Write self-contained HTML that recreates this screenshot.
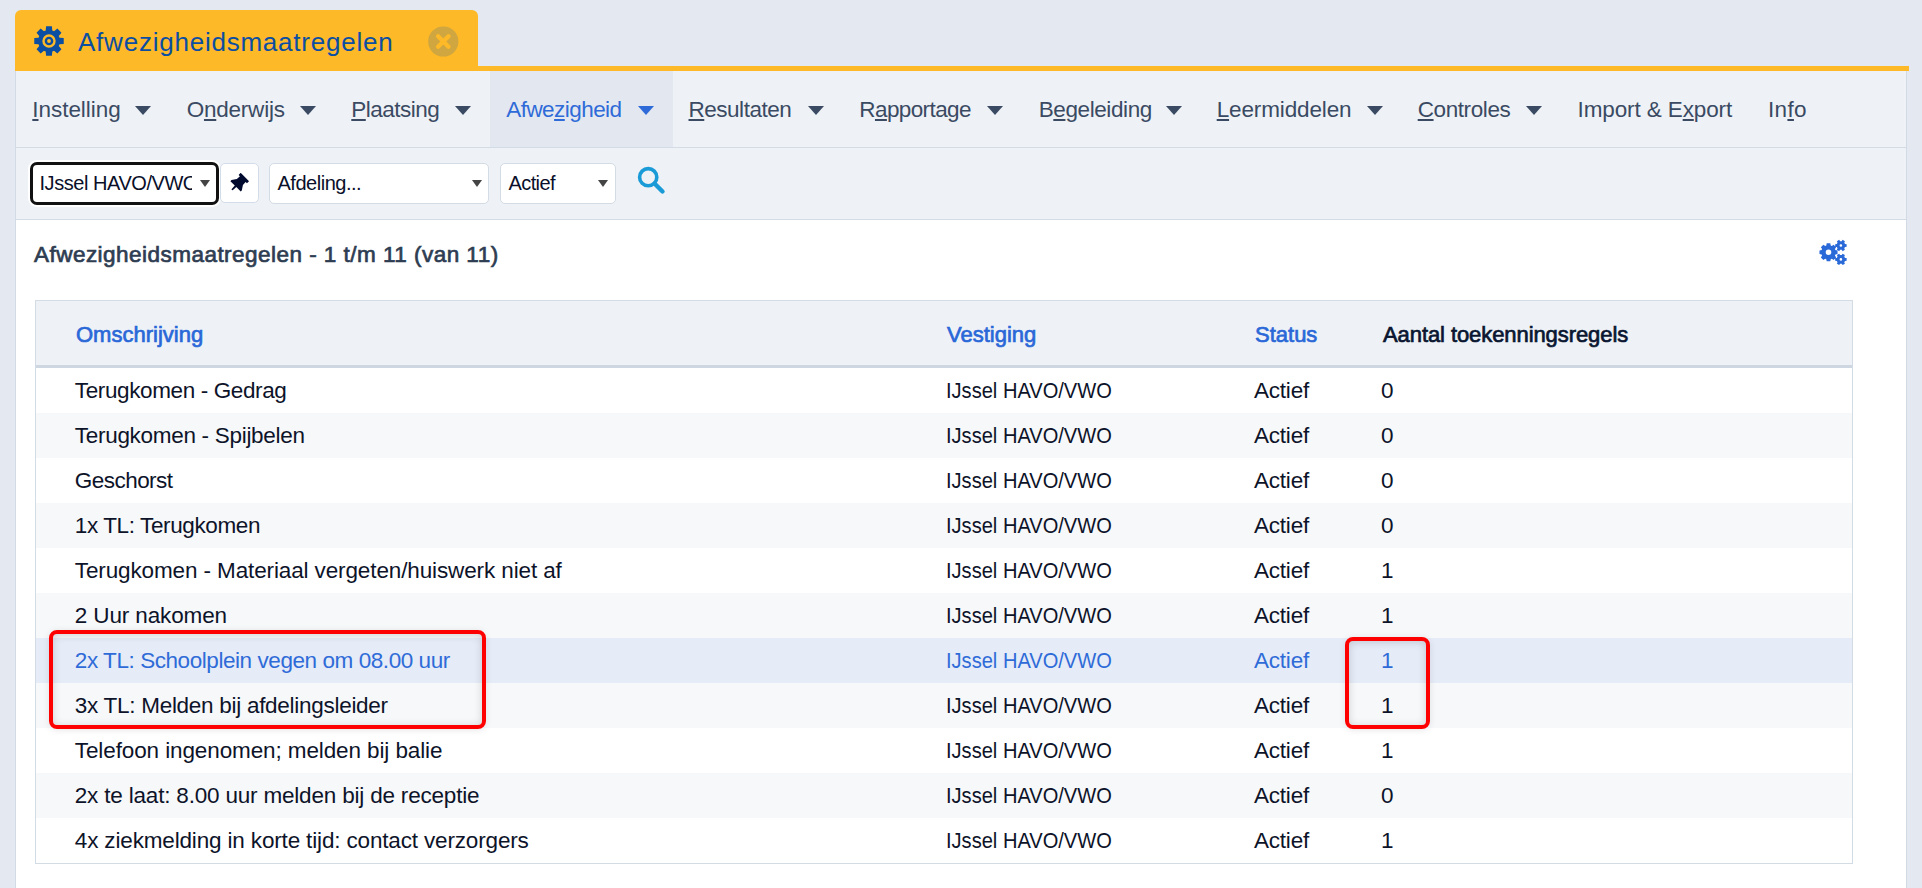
<!DOCTYPE html>
<html>
<head>
<meta charset="utf-8">
<style>
html,body{margin:0;padding:0;}
body{width:1922px;height:888px;overflow:hidden;background:#e4e9f1;position:relative;font-family:"Liberation Sans",sans-serif;}
.abs{position:absolute;}
#tab{left:15px;top:10px;width:463px;height:61px;background:#fdb928;border-radius:6px 6px 0 0;}
#tabline{left:15px;top:66px;width:1894px;height:5px;background:#fdb928;}
#panel{left:15px;top:71px;width:1890px;height:830px;background:#fff;border-left:1px solid #d2dae5;border-right:1px solid #d2dae5;}
#nav{left:16px;top:71px;width:1890px;height:76px;background:#eef2f6;border-bottom:1px solid #d3dbe5;}
#navactive{left:490px;top:71px;width:183px;height:76px;background:#e3e8f0;}
#filter{left:16px;top:148px;width:1890px;height:71px;background:#eef2f6;border-bottom:1px solid #d3dbe5;}
.tabtitle{left:78px;top:25px;font-size:26px;color:#0b4ea2;letter-spacing:0.77px;line-height:34px;white-space:nowrap;}
.nav{top:95.5px;font-size:22.5px;line-height:28px;color:#3b4a63;white-space:nowrap;}
.nav u{text-decoration:underline;text-decoration-thickness:2px;text-underline-offset:1.5px;}
.nav.act{color:#2f6bd8;}
.arr{top:106px;width:0;height:0;border-left:8px solid transparent;border-right:8px solid transparent;border-top:9px solid #3b4a63;}
.arr.act{border-top-color:#2f6bd8;}
.sel{background:#fff;border:1px solid #d3dbe5;border-radius:5px;box-sizing:border-box;font-size:20px;color:#0a0f2a;}
.sel span{position:absolute;top:8px;white-space:nowrap;}
.sarr{position:absolute;width:0;height:0;border-left:5px solid transparent;border-right:5px solid transparent;border-top:7.7px solid #444;}
#heading{left:34px;top:241px;font-size:22.5px;font-weight:normal;-webkit-text-stroke:0.7px currentColor;color:#2e3d52;letter-spacing:0.47px;white-space:nowrap;line-height:28px;}
#table{left:35px;top:300px;width:1818px;height:564px;border:1px solid #d3dbe5;box-sizing:border-box;background:#fff;}
#thead{left:36px;top:301px;width:1816px;height:64px;background:#eef2f6;border-bottom:3px solid #cdd6e1;}
.th{top:321px;font-size:22px;line-height:28px;white-space:nowrap;-webkit-text-stroke:0.7px currentColor;}
.row{left:36px;width:1816px;height:45px;}
.alt{background:#f7f8fa;}
.hl{background:#e5ebf7;}
.td{font-size:22.5px;line-height:28px;color:#0d1329;white-space:nowrap;top:8.5px;}
.hl .td{color:#2f6bd8;}
.vest{transform-origin:0 0;transform:scaleX(0.8922);}
.redbox{border:4px solid #ff0000;border-radius:8px;box-sizing:border-box;box-shadow:inset 0 1px 9px rgba(0,0,0,0.16),0 1px 7px rgba(0,0,0,0.10);}
</style>
</head>
<body>
<div id="panel" class="abs"></div>
<div id="tabline" class="abs"></div>
<div id="tab" class="abs"></div>
<svg class="abs" style="left:34px;top:26px" width="30" height="30" viewBox="0 0 30 30">
  <path d="M11.70 4.51 L12.10 0.28 L17.90 0.28 L18.30 4.51 L20.09 5.25 L23.36 2.54 L27.46 6.64 L24.75 9.91 L25.49 11.70 L29.72 12.10 L29.72 17.90 L25.49 18.30 L24.75 20.09 L27.46 23.36 L23.36 27.46 L20.09 24.75 L18.30 25.49 L17.90 29.72 L12.10 29.72 L11.70 25.49 L9.91 24.75 L6.64 27.46 L2.54 23.36 L5.25 20.09 L4.51 18.30 L0.28 17.90 L0.28 12.10 L4.51 11.70 L5.25 9.91 L2.54 6.64 L6.64 2.54 L9.91 5.25 Z" fill="#0b4ea2"/>
  <circle cx="15" cy="15" r="5.5" fill="none" stroke="#fdb928" stroke-width="2.4"/>
  <circle cx="15" cy="15" r="1.9" fill="#fdb928"/>
</svg>
<div class="abs tabtitle">Afwezigheidsmaatregelen</div>
<svg class="abs" style="left:427.5px;top:26px" width="31" height="31" viewBox="0 0 31 31">
  <circle cx="15.3" cy="15.5" r="15.1" fill="#cfa63f"/>
  <path d="M10.1 10.3 L20.5 20.7 M20.5 10.3 L10.1 20.7" stroke="#fdb928" stroke-width="4.4" stroke-linecap="round"/>
</svg>
<div id="nav" class="abs"></div>
<div id="navactive" class="abs"></div>
<div id="filter" class="abs"></div>
<div class="nav abs" style="left:32.30px;letter-spacing:-0.045px"><u>I</u>nstelling</div>
<div class="arr abs" style="left:135.2px"></div>
<div class="nav abs" style="left:186.70px;letter-spacing:-0.225px">O<u>n</u>derwijs</div>
<div class="arr abs" style="left:300.2px"></div>
<div class="nav abs" style="left:351.30px;letter-spacing:-0.525px"><u>P</u>laatsing</div>
<div class="arr abs" style="left:454.8px"></div>
<div class="nav abs act" style="left:506.30px;letter-spacing:-0.56px">Afwe<u>z</u>igheid</div>
<div class="arr abs act" style="left:637.8px"></div>
<div class="nav abs" style="left:688.50px;letter-spacing:-0.478px"><u>R</u>esultaten</div>
<div class="arr abs" style="left:808.0px"></div>
<div class="nav abs" style="left:859.30px;letter-spacing:-0.6px">R<u>a</u>pportage</div>
<div class="arr abs" style="left:987.0px"></div>
<div class="nav abs" style="left:1038.70px;letter-spacing:-0.4px">B<u>e</u>geleiding</div>
<div class="arr abs" style="left:1166.2px"></div>
<div class="nav abs" style="left:1216.70px;letter-spacing:-0.128px"><u>L</u>eermiddelen</div>
<div class="arr abs" style="left:1366.5px"></div>
<div class="nav abs" style="left:1417.70px;letter-spacing:-0.4px"><u>C</u>ontroles</div>
<div class="arr abs" style="left:1526.3px"></div>
<div class="nav abs" style="left:1577.50px;letter-spacing:-0.114px">Import &amp; E<u>x</u>port</div>
<div class="nav abs" style="left:1768.10px;letter-spacing:0.267px">In<u>f</u>o</div>
<div class="abs sel" style="left:30px;top:162px;width:189px;height:43px;border:3.5px solid #111;border-radius:7px;box-shadow:0 0 0 2px #fff;overflow:hidden">
  <span style="left:6.5px;top:7px;width:152px;overflow:hidden;letter-spacing:-0.45px">IJssel HAVO/VWO</span>
  <div class="sarr" style="left:166.5px;top:14.5px"></div>
</div>
<div class="abs sel" style="left:220px;top:163px;width:39px;height:40px;border-color:#d3dde9"></div>
<svg class="abs" style="left:220px;top:163px" width="39" height="40" viewBox="220 163 39 40">
  <g transform="translate(238.4 183.5) rotate(45) translate(0 -9.1)" fill="#000a2e">
    <path d="M-5.9 0.3 Q-5.9 0 -5.6 0 L5.6 0 Q5.9 0 5.9 0.3 L5.9 2.6 Q5.9 2.9 5.6 2.9 L4.0 2.9 L4.3 7.0 L7.3 11.6 L7.3 13.1 L1.1 13.1 L0.8 18.0 Q0 18.6 -0.8 18.0 L-1.1 13.1 L-7.3 13.1 L-7.3 11.6 L-4.3 7.0 L-4.0 2.9 L-5.6 2.9 Q-5.9 2.9 -5.9 2.6 Z"/>
  </g>
</svg>
<div class="abs sel" style="left:269px;top:163px;width:220px;height:41px;">
  <span style="left:7.5px;top:8px;letter-spacing:-0.48px">Afdeling...</span>
  <div class="sarr" style="left:201.5px;top:15.5px"></div>
</div>
<div class="abs sel" style="left:500px;top:163px;width:116px;height:41px;">
  <span style="left:7.5px;top:8px;letter-spacing:-0.6px">Actief</span>
  <div class="sarr" style="left:96.6px;top:15.5px"></div>
</div>
<svg class="abs" style="left:634px;top:163px" width="34" height="34" viewBox="0 0 34 34">
  <circle cx="14.2" cy="14.2" r="8.6" fill="none" stroke="#1a9bd7" stroke-width="3.6"/>
  <path d="M20.5 20.5 L28.5 28.5" stroke="#1a9bd7" stroke-width="4.4" stroke-linecap="round"/>
</svg>
<div id="heading" class="abs">Afwezigheidsmaatregelen - 1 t/m 11 (van 11)</div>
<svg class="abs" style="left:1816px;top:238px" width="32" height="30" viewBox="0 0 32 30"><path fill-rule="evenodd" fill="#2a69d8" d="M10.30 7.44 L10.70 5.28 L14.30 5.28 L14.70 7.44 L15.79 7.90 L17.61 6.65 L20.15 9.19 L18.90 11.01 L19.36 12.10 L21.52 12.50 L21.52 16.10 L19.36 16.50 L18.90 17.59 L20.15 19.41 L17.61 21.95 L15.79 20.70 L14.70 21.16 L14.30 23.32 L10.70 23.32 L10.30 21.16 L9.21 20.70 L7.39 21.95 L4.85 19.41 L6.10 17.59 L5.64 16.50 L3.48 16.10 L3.48 12.50 L5.64 12.10 L6.10 11.01 L4.85 9.19 L7.39 6.65 L9.21 7.90 Z M9.70 14.30 a2.80 2.80 0 1 0 5.60 0 a2.80 2.80 0 1 0 -5.60 0 Z M25.67 3.17 L26.65 1.87 L28.90 3.17 L28.27 4.67 L29.04 6.00 L30.65 6.20 L30.65 8.80 L29.04 9.00 L28.27 10.33 L28.90 11.83 L26.65 13.13 L25.67 11.83 L24.13 11.83 L23.15 13.13 L20.90 11.83 L21.53 10.33 L20.76 9.00 L19.15 8.80 L19.15 6.20 L20.76 6.00 L21.53 4.67 L20.90 3.17 L23.15 1.87 L24.13 3.17 Z M23.60 7.50 a1.30 1.30 0 1 0 2.60 0 a1.30 1.30 0 1 0 -2.60 0 Z M25.67 17.07 L26.65 15.77 L28.90 17.07 L28.27 18.57 L29.04 19.90 L30.65 20.10 L30.65 22.70 L29.04 22.90 L28.27 24.23 L28.90 25.73 L26.65 27.03 L25.67 25.73 L24.13 25.73 L23.15 27.03 L20.90 25.73 L21.53 24.23 L20.76 22.90 L19.15 22.70 L19.15 20.10 L20.76 19.90 L21.53 18.57 L20.90 17.07 L23.15 15.77 L24.13 17.07 Z M23.60 21.40 a1.30 1.30 0 1 0 2.60 0 a1.30 1.30 0 1 0 -2.60 0 Z"/></svg>
<div id="table" class="abs"></div>
<div id="thead" class="abs"></div>
<div class="abs th" style="left:76px;color:#2a68d8">Omschrijving</div>
<div class="abs th" style="left:947px;color:#2a68d8">Vestiging</div>
<div class="abs th" style="left:1255px;color:#2a68d8">Status</div>
<div class="abs th" style="left:1383px;color:#0a1631;letter-spacing:-0.08px">Aantal toekenningsregels</div>
<div class="row abs" style="top:368px"><div class="abs td" style="left:38.8px;letter-spacing:-0.378px">Terugkomen - Gedrag</div><div class="abs td vest" style="left:910px">IJssel HAVO/VWO</div><div class="abs td" style="left:1218px;letter-spacing:-0.22px">Actief</div><div class="abs td" style="left:1345px">0</div></div>
<div class="row abs alt" style="top:413px"><div class="abs td" style="left:38.8px;letter-spacing:-0.295px">Terugkomen - Spijbelen</div><div class="abs td vest" style="left:910px">IJssel HAVO/VWO</div><div class="abs td" style="left:1218px;letter-spacing:-0.22px">Actief</div><div class="abs td" style="left:1345px">0</div></div>
<div class="row abs" style="top:458px"><div class="abs td" style="left:38.8px;letter-spacing:-0.539px">Geschorst</div><div class="abs td vest" style="left:910px">IJssel HAVO/VWO</div><div class="abs td" style="left:1218px;letter-spacing:-0.22px">Actief</div><div class="abs td" style="left:1345px">0</div></div>
<div class="row abs alt" style="top:503px"><div class="abs td" style="left:38.8px;letter-spacing:-0.381px">1x TL: Terugkomen</div><div class="abs td vest" style="left:910px">IJssel HAVO/VWO</div><div class="abs td" style="left:1218px;letter-spacing:-0.22px">Actief</div><div class="abs td" style="left:1345px">0</div></div>
<div class="row abs" style="top:548px"><div class="abs td" style="left:38.8px;letter-spacing:-0.122px">Terugkomen - Materiaal vergeten/huiswerk niet af</div><div class="abs td vest" style="left:910px">IJssel HAVO/VWO</div><div class="abs td" style="left:1218px;letter-spacing:-0.22px">Actief</div><div class="abs td" style="left:1345px">1</div></div>
<div class="row abs alt" style="top:593px"><div class="abs td" style="left:38.8px;letter-spacing:-0.125px">2 Uur nakomen</div><div class="abs td vest" style="left:910px">IJssel HAVO/VWO</div><div class="abs td" style="left:1218px;letter-spacing:-0.22px">Actief</div><div class="abs td" style="left:1345px">1</div></div>
<div class="row abs hl" style="top:638px"><div class="abs td" style="left:38.8px;letter-spacing:-0.434px">2x TL: Schoolplein vegen om 08.00 uur</div><div class="abs td vest" style="left:910px">IJssel HAVO/VWO</div><div class="abs td" style="left:1218px;letter-spacing:-0.22px">Actief</div><div class="abs td" style="left:1345px">1</div></div>
<div class="row abs alt" style="top:683px"><div class="abs td" style="left:38.8px;letter-spacing:-0.281px">3x TL: Melden bij afdelingsleider</div><div class="abs td vest" style="left:910px">IJssel HAVO/VWO</div><div class="abs td" style="left:1218px;letter-spacing:-0.22px">Actief</div><div class="abs td" style="left:1345px">1</div></div>
<div class="row abs" style="top:728px"><div class="abs td" style="left:38.8px;letter-spacing:-0.109px">Telefoon ingenomen; melden bij balie</div><div class="abs td vest" style="left:910px">IJssel HAVO/VWO</div><div class="abs td" style="left:1218px;letter-spacing:-0.22px">Actief</div><div class="abs td" style="left:1345px">1</div></div>
<div class="row abs alt" style="top:773px"><div class="abs td" style="left:38.8px;letter-spacing:-0.19px">2x te laat: 8.00 uur melden bij de receptie</div><div class="abs td vest" style="left:910px">IJssel HAVO/VWO</div><div class="abs td" style="left:1218px;letter-spacing:-0.22px">Actief</div><div class="abs td" style="left:1345px">0</div></div>
<div class="row abs" style="top:818px"><div class="abs td" style="left:38.8px;letter-spacing:-0.158px">4x ziekmelding in korte tijd: contact verzorgers</div><div class="abs td vest" style="left:910px">IJssel HAVO/VWO</div><div class="abs td" style="left:1218px;letter-spacing:-0.22px">Actief</div><div class="abs td" style="left:1345px">1</div></div>
<div class="abs redbox" style="left:49px;top:630px;width:437px;height:99px"></div>
<div class="abs redbox" style="left:1345px;top:637px;width:85px;height:92px"></div>
</body>
</html>
